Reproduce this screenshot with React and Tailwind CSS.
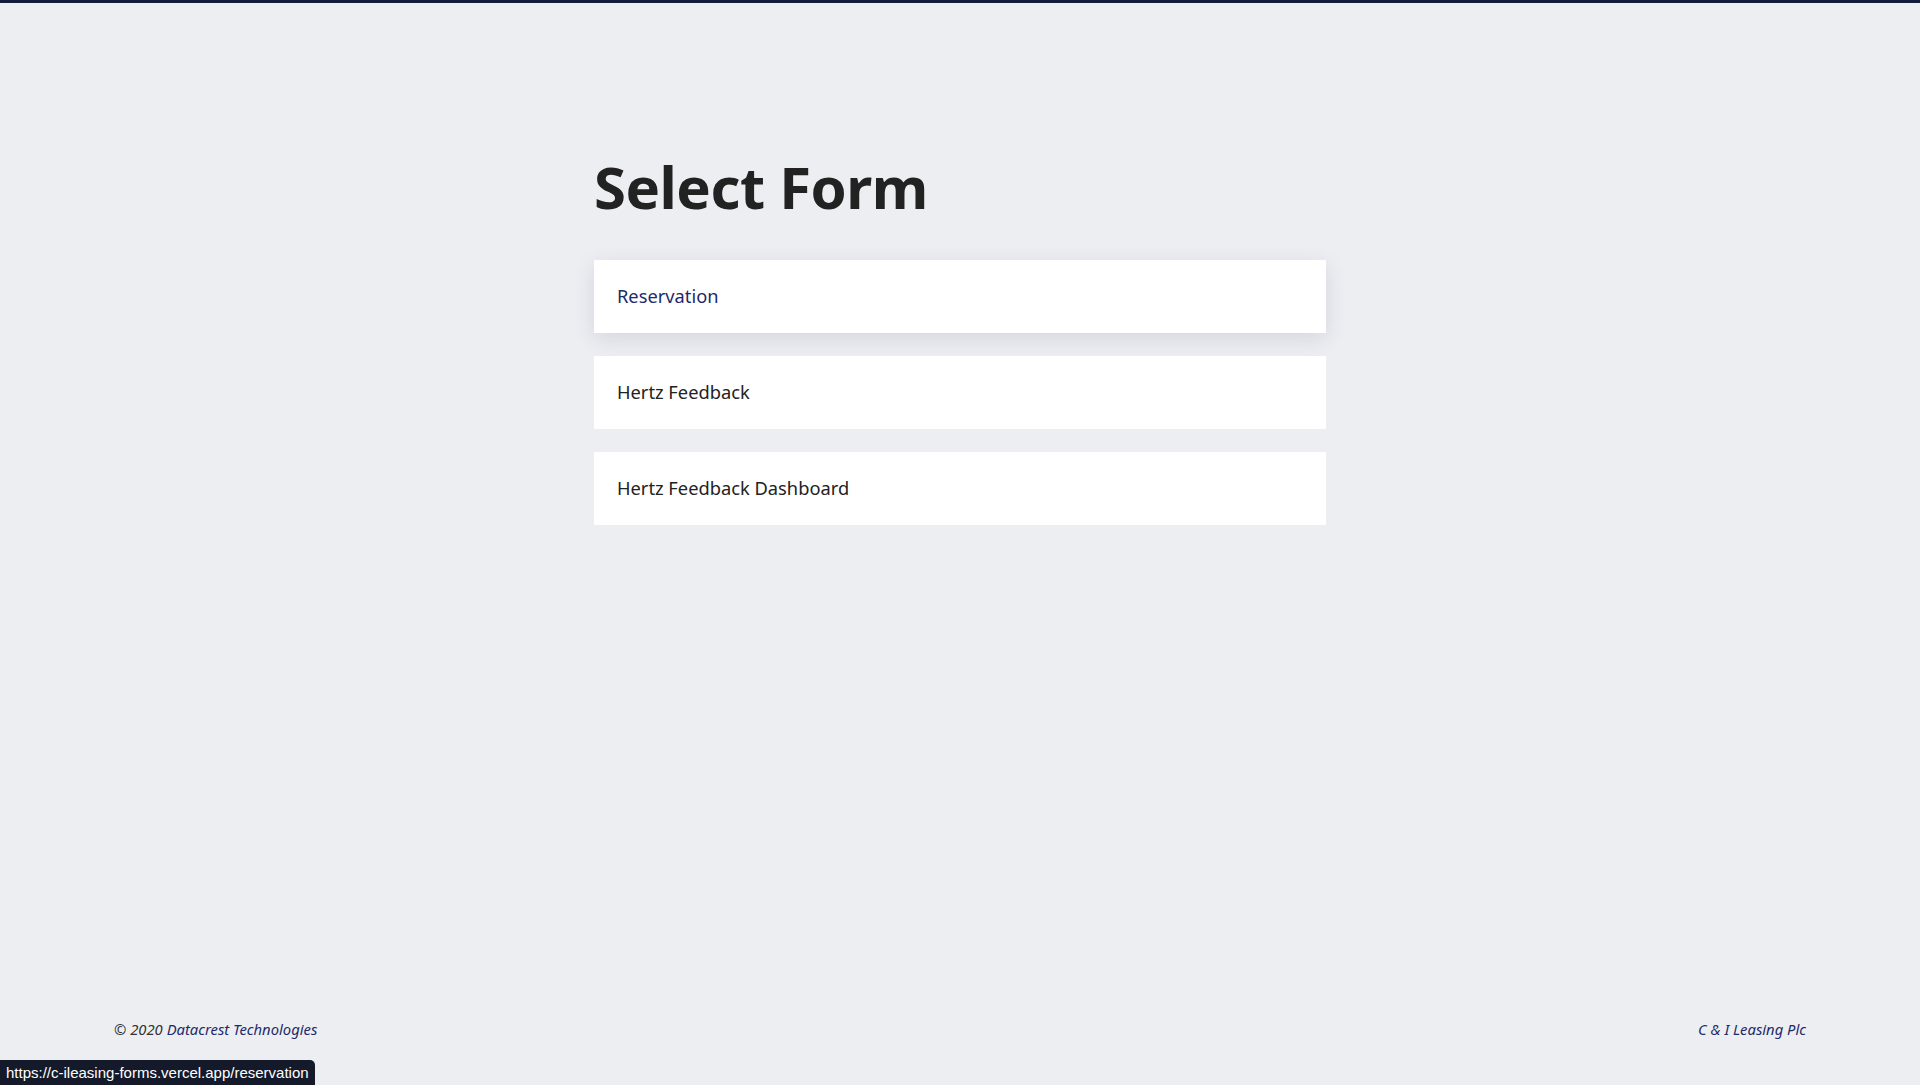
import React from "react";

const forms = [
  { name: "Reservation", active: true },
  { name: "Hertz Feedback" },
  { name: "Hertz Feedback Dashboard" },
];

const App = () => {
  return (
    <div
      className="relative flex min-h-screen flex-col border-t-[3px] border-[#121c3d] bg-[#edeef2] text-[#222]"
      style={{ fontFamily: '"Noto Sans", "Open Sans", sans-serif' }}
    >
      <main className="flex-1">
        <div className="mx-auto w-[732px] pt-[149px]">
          <h1 className="text-[58px] font-bold leading-[1.2] tracking-[-0.5px] text-[#222]">
            Select Form
          </h1>
          <div className="mt-[38px] flex flex-col gap-[23px]">
            {forms.map((f) => (
              <a
                key={f.name}
                href="#"
                className={
                  f.active
                    ? "flex h-[73px] items-center bg-white px-[23px] text-[18.3px] text-[#1d2a6b] shadow-[0_6px_20px_rgba(40,50,100,0.12)]"
                    : "flex h-[73px] items-center bg-white px-[23px] text-[18.3px] text-[#222]"
                }
              >
                {f.name}
              </a>
            ))}
          </div>
        </div>
      </main>
      <footer className="flex items-center justify-between px-[114px] pb-[45px] text-[14.8px] italic">
        <p className="text-[#333]">
          © 2020 <span className="text-[#1d2a6b]">Datacrest Technologies</span>
        </p>
        <p className="text-[#1d2a6b]">C &amp; I Leasing Plc</p>
      </footer>
      <div
        className="absolute bottom-0 left-0 rounded-tr-[5px] bg-[#141a2a] px-[6px] py-[3px] text-[15px] leading-[19px] text-white"
        style={{ fontFamily: '"Liberation Sans", Arial, sans-serif' }}
      >
        https://c-ileasing-forms.vercel.app/reservation
      </div>
    </div>
  );
};

export default App;
